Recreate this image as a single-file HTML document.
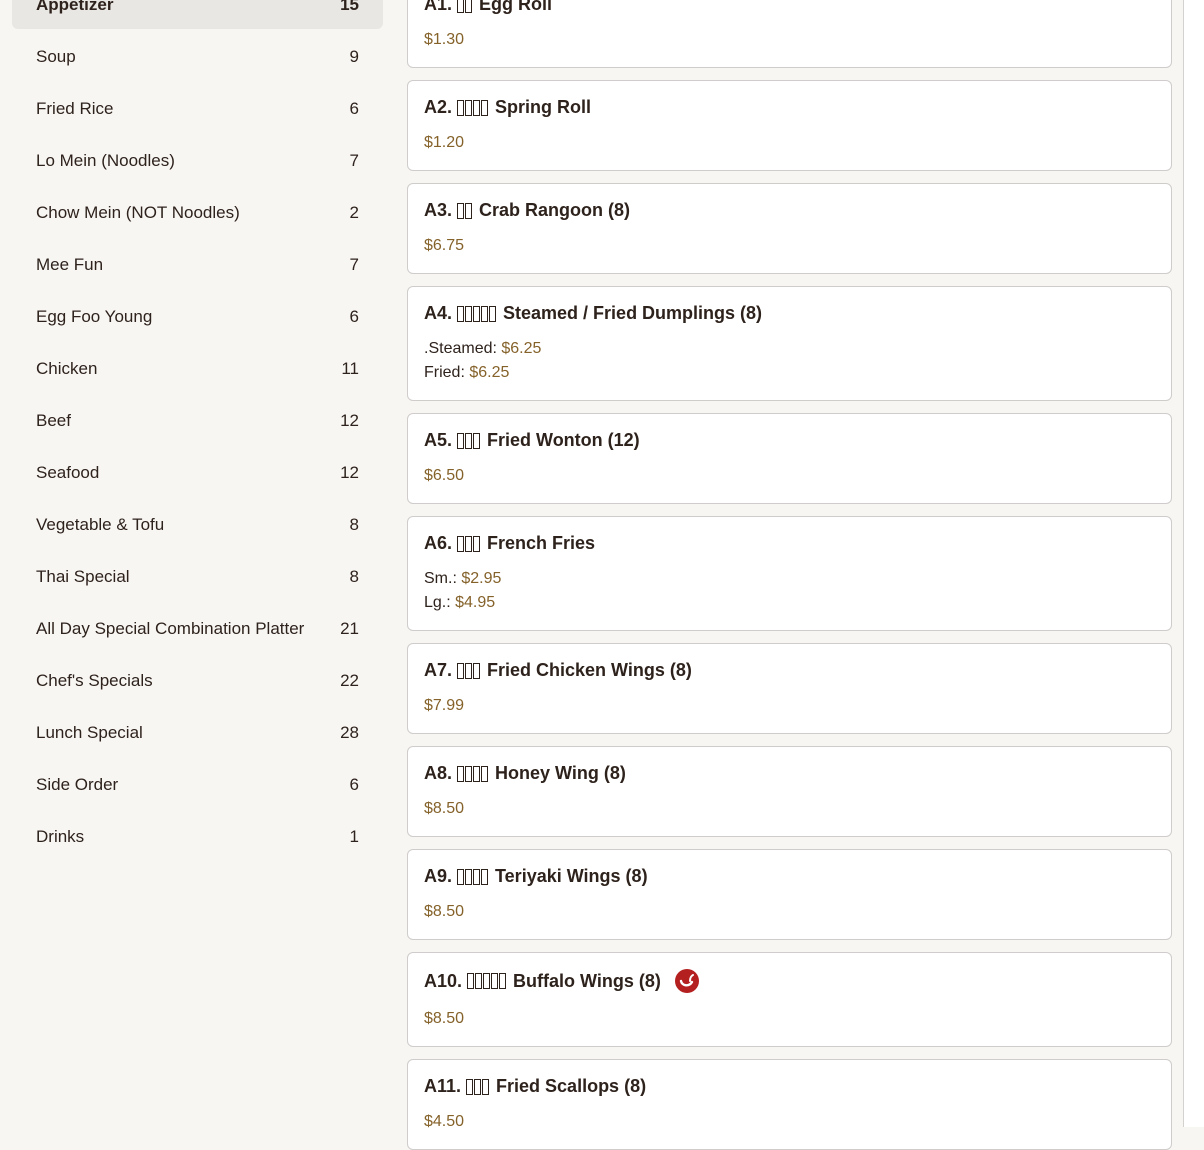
<!DOCTYPE html>
<html><head><meta charset="utf-8"><style>
*{box-sizing:border-box;margin:0;padding:0}
body{width:1204px;height:1127px;overflow:hidden;background:#f8f6f3;font-family:"Liberation Sans",sans-serif;position:relative;color:#2e221c}
.side{position:absolute;left:0;top:0;width:395px;height:1127px;background:#f8f6f3}
.it{position:absolute;left:12px;width:371px;height:50px;display:flex;justify-content:space-between;align-items:center;padding:2px 24px 0;font-size:17px;color:#2e221c}
.it.act{background:#e9e7e3;border-radius:6px;font-weight:bold}
.card{position:absolute;left:407px;width:765px;background:#fff;border:1px solid #cfcccb;border-radius:6px;padding:0 16px}
.t{position:absolute;left:16px;top:16px;font-size:18px;font-weight:bold;color:#2e221c;white-space:nowrap;display:flex;align-items:center}
.p{position:absolute;left:16px;font-size:16px;color:#85622a}
.l{color:#2e221c}
.b{display:inline-block;width:7px;height:16px;border:1px solid #2e221c;margin-right:1px;vertical-align:-2px}
.g{margin-right:6px;display:inline-flex}
.sb{position:absolute;left:1183px;top:0;width:21px;height:1127px;background:#fff;border-left:1px solid #d4d2d0}
</style></head><body>
<div class="side">
<div class="it act" style="top:-21px"><span>Appetizer</span><span>15</span></div>
<div class="it" style="top:31px"><span>Soup</span><span>9</span></div>
<div class="it" style="top:83px"><span>Fried Rice</span><span>6</span></div>
<div class="it" style="top:135px"><span>Lo Mein (Noodles)</span><span>7</span></div>
<div class="it" style="top:187px"><span>Chow Mein (NOT Noodles)</span><span>2</span></div>
<div class="it" style="top:239px"><span>Mee Fun</span><span>7</span></div>
<div class="it" style="top:291px"><span>Egg Foo Young</span><span>6</span></div>
<div class="it" style="top:343px"><span>Chicken</span><span>11</span></div>
<div class="it" style="top:395px"><span>Beef</span><span>12</span></div>
<div class="it" style="top:447px"><span>Seafood</span><span>12</span></div>
<div class="it" style="top:499px"><span>Vegetable &amp; Tofu</span><span>8</span></div>
<div class="it" style="top:551px"><span>Thai Special</span><span>8</span></div>
<div class="it" style="top:603px"><span>All Day Special Combination Platter</span><span>21</span></div>
<div class="it" style="top:655px"><span>Chef's Specials</span><span>22</span></div>
<div class="it" style="top:707px"><span>Lunch Special</span><span>28</span></div>
<div class="it" style="top:759px"><span>Side Order</span><span>6</span></div>
<div class="it" style="top:811px"><span>Drinks</span><span>1</span></div>
</div>

<div class="card" style="top:-23px;height:91px"><div class="t">A1.&nbsp;<span class="g"><i class="b"></i><i class="b"></i></span>Egg Roll</div><div class="p" style="top:53px">$1.30</div></div>
<div class="card" style="top:80px;height:91px"><div class="t">A2.&nbsp;<span class="g"><i class="b"></i><i class="b"></i><i class="b"></i><i class="b"></i></span>Spring Roll</div><div class="p" style="top:53px">$1.20</div></div>
<div class="card" style="top:183px;height:91px"><div class="t">A3.&nbsp;<span class="g"><i class="b"></i><i class="b"></i></span>Crab Rangoon (8)</div><div class="p" style="top:53px">$6.75</div></div>
<div class="card" style="top:286px;height:115px"><div class="t">A4.&nbsp;<span class="g"><i class="b"></i><i class="b"></i><i class="b"></i><i class="b"></i><i class="b"></i></span>Steamed / Fried Dumplings (8)</div><div class="p" style="top:53px"><span class="l">.Steamed:</span> $6.25</div><div class="p" style="top:77px"><span class="l">Fried:</span> $6.25</div></div>
<div class="card" style="top:413px;height:91px"><div class="t">A5.&nbsp;<span class="g"><i class="b"></i><i class="b"></i><i class="b"></i></span>Fried Wonton (12)</div><div class="p" style="top:53px">$6.50</div></div>
<div class="card" style="top:516px;height:115px"><div class="t">A6.&nbsp;<span class="g"><i class="b"></i><i class="b"></i><i class="b"></i></span>French Fries</div><div class="p" style="top:53px"><span class="l">Sm.:</span> $2.95</div><div class="p" style="top:77px"><span class="l">Lg.:</span> $4.95</div></div>
<div class="card" style="top:643px;height:91px"><div class="t">A7.&nbsp;<span class="g"><i class="b"></i><i class="b"></i><i class="b"></i></span>Fried Chicken Wings (8)</div><div class="p" style="top:53px">$7.99</div></div>
<div class="card" style="top:746px;height:91px"><div class="t">A8.&nbsp;<span class="g"><i class="b"></i><i class="b"></i><i class="b"></i><i class="b"></i></span>Honey Wing (8)</div><div class="p" style="top:53px">$8.50</div></div>
<div class="card" style="top:849px;height:91px"><div class="t">A9.&nbsp;<span class="g"><i class="b"></i><i class="b"></i><i class="b"></i><i class="b"></i></span>Teriyaki Wings (8)</div><div class="p" style="top:53px">$8.50</div></div>
<div class="card" style="top:952px;height:95px"><div class="t">A10.&nbsp;<span class="g"><i class="b"></i><i class="b"></i><i class="b"></i><i class="b"></i><i class="b"></i></span>Buffalo Wings (8)
<svg width="24" height="24" viewBox="0 0 24 24" style="margin-left:14px"><circle cx="12" cy="12" r="12" fill="#b3201f"/><path d="M6 12c1 5 8 6 11 1" stroke="#fff" stroke-width="2.4" fill="none" stroke-linecap="round"/><path d="M15 12c0-3 1-5 3-6" stroke="#fff" stroke-width="2" fill="none" stroke-linecap="round"/></svg></div><div class="p" style="top:57px">$8.50</div></div>
<div class="card" style="top:1059px;height:91px"><div class="t">A11.&nbsp;<span class="g"><i class="b"></i><i class="b"></i><i class="b"></i></span>Fried Scallops (8)</div><div class="p" style="top:53px">$4.50</div></div>
<div class="sb"></div>
</body></html>
